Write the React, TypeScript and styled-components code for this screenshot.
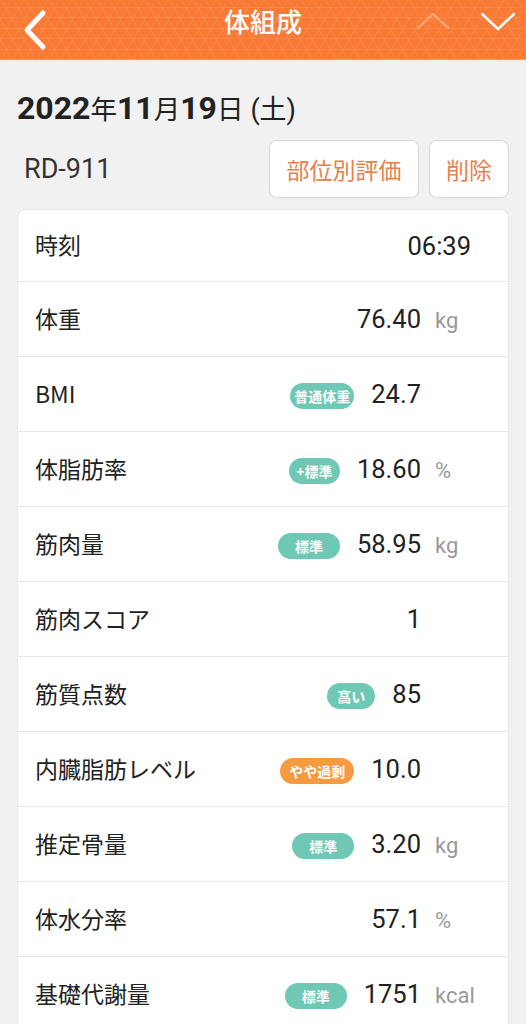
import React from 'react';
import styled, { createGlobalStyle } from 'styled-components';

const GlobalStyle = createGlobalStyle`
  html, body {
    margin: 0;
    padding: 0;
    background: #f1f1f1;
  }
  body {
    font-family: Roboto, "Noto Sans CJK JP", sans-serif;
    color: #222;
  }
`;

const Page = styled.div`
  width: 526px;
  min-height: 1024px;
  background: #f1f1f1;
  overflow: hidden;
`;

const Header = styled.header`
  height: 60px;
  display: grid;
  grid-template-columns: 60px 1fr 120px;
  align-items: center;
  background-color: #f97a34;
  background-image:
    repeating-linear-gradient(0deg, transparent 0 9.4px, rgba(255, 255, 255, 0.07) 9.4px 10.4px),
    repeating-linear-gradient(60deg, transparent 0 9.4px, rgba(255, 255, 255, 0.07) 9.4px 10.4px),
    repeating-linear-gradient(120deg, transparent 0 9.4px, rgba(255, 255, 255, 0.07) 9.4px 10.4px);
  border-bottom: 1px solid #fb9a66;
  box-sizing: border-box;
`;

const IconButton = styled.button<{ dim?: boolean }>`
  background: none;
  border: none;
  padding: 0;
  display: flex;
  align-items: center;
  justify-content: center;
  opacity: ${p => (p.dim ? 0.3 : 1)};
  cursor: pointer;
`;

const Title = styled.h1`
  margin: 0;
  text-align: center;
  color: #fff;
  font-family: "Noto Sans CJK JP", sans-serif;
  font-size: 26px;
  font-weight: 500;
  padding-left: 60px;
  margin-top: -18px;
`;

const NavGroup = styled.div`
  display: flex;
  justify-content: flex-end;
  align-items: flex-start;
  gap: 28px;
  padding-right: 10px;
  margin-top: -18px;
`;

const Main = styled.main`
  padding: 0 17px;
`;

const DateLine = styled.div`
  margin-top: 28px;
  height: 40px;
  display: flex;
  align-items: baseline;
  font-family: "Noto Sans CJK JP", sans-serif;
  font-size: 26.5px;
  color: #222;
`;

const DateNum = styled.span`
  font-family: Roboto, sans-serif;
  font-weight: 700;
  font-size: 32px;
`;

const Weekday = styled.span`
  font-family: Roboto, "Noto Sans CJK JP", sans-serif;
  font-size: 27px;
  margin-left: 7px;
`;

const ActionRow = styled.div`
  margin-top: 12px;
  display: flex;
  align-items: center;
  gap: 10px;
`;

const Model = styled.div`
  flex: 1;
  padding-left: 7px;
  font-size: 27px;
  color: #333;
`;

const ActionButton = styled.button<{ w: number }>`
  width: ${p => p.w}px;
  height: 58px;
  background: #fff;
  border: 1px solid #d8d8d8;
  border-radius: 8px;
  color: #e8804c;
  font-family: "Noto Sans CJK JP", sans-serif;
  font-size: 23px;
  padding: 0;
`;

const Card = styled.section`
  margin-top: 11px;
  background: #fff;
  border: 1px solid #e6e6e6;
  border-bottom: none;
  border-radius: 8px 8px 0 0;
`;

const Row = styled.div<{ h?: number }>`
  height: ${p => p.h ?? 74}px;
  display: flex;
  align-items: center;
  padding: 0 17px;
  border-bottom: 1px solid #e8e8e8;
`;

const Label = styled.div`
  flex: 1;
  font-family: "Noto Sans CJK JP", sans-serif;
  font-size: 23px;
  color: #222;
  margin-top: -3px;
`;

const Badge = styled.span<{ tone: 'teal' | 'orange'; w: number }>`
  width: ${p => p.w}px;
  height: 26px;
  border-radius: 13px;
  background: ${p => (p.tone === 'orange' ? '#f59a3e' : '#6ec8b4')};
  color: #fff;
  font-family: "Noto Sans CJK JP", sans-serif;
  font-size: 14px;
  font-weight: 700;
  display: inline-flex;
  align-items: center;
  justify-content: center;
  margin-right: 17px;
  margin-top: 4px;
`;

const Value = styled.span`
  font-family: Roboto, sans-serif;
  font-size: 25.5px;
  color: #222;
`;

const Unit = styled.span`
  width: 56px;
  margin-left: 14px;
  font-family: Roboto, sans-serif;
  font-size: 22px;
  color: #999;
  padding-top: 3px;
`;

const TimeValue = styled(Value)`
  margin-right: 20px;
`;

const ChevronLeft = () => (
  <svg width="40" height="50" viewBox="0 0 40 50">
    <polyline points="33,8 17,25 33,42" fill="none" stroke="#fff" strokeWidth="5" strokeLinecap="round" strokeLinejoin="round" />
  </svg>
);

const ChevronUp = () => (
  <svg width="36" height="20" viewBox="0 0 36 20">
    <polyline points="2,17 17,3 32,17" fill="none" stroke="#fff" strokeWidth="2.5" strokeLinecap="round" strokeLinejoin="round" />
  </svg>
);

const ChevronDown = () => (
  <svg width="36" height="20" viewBox="0 0 36 20">
    <polyline points="2,3 18,18 34,3" fill="none" stroke="#fff" strokeWidth="2.5" strokeLinecap="round" strokeLinejoin="round" />
  </svg>
);

type Item = {
  label: string;
  value: string;
  unit?: string;
  badge?: { text: string; tone: 'teal' | 'orange'; w: number };
};

const items: Item[] = [
  { label: '体重', value: '76.40', unit: 'kg' },
  { label: 'BMI', value: '24.7', badge: { text: '普通体重', tone: 'teal', w: 64 } },
  { label: '体脂肪率', value: '18.60', unit: '%', badge: { text: '+標準', tone: 'teal', w: 51 } },
  { label: '筋肉量', value: '58.95', unit: 'kg', badge: { text: '標準', tone: 'teal', w: 62 } },
  { label: '筋肉スコア', value: '1' },
  { label: '筋質点数', value: '85', badge: { text: '高い', tone: 'teal', w: 48 } },
  { label: '内臓脂肪レベル', value: '10.0', badge: { text: 'やや過剰', tone: 'orange', w: 74 } },
  { label: '推定骨量', value: '3.20', unit: 'kg', badge: { text: '標準', tone: 'teal', w: 62 } },
  { label: '体水分率', value: '57.1', unit: '%' },
  { label: '基礎代謝量', value: '1751', unit: 'kcal', badge: { text: '標準', tone: 'teal', w: 62 } },
];

export default function App() {
  return (
    <Page>
      <GlobalStyle />
      <Header>
        <IconButton aria-label="戻る">
          <ChevronLeft />
        </IconButton>
        <Title>体組成</Title>
        <NavGroup>
          <IconButton dim aria-label="前へ">
            <ChevronUp />
          </IconButton>
          <IconButton aria-label="次へ">
            <ChevronDown />
          </IconButton>
        </NavGroup>
      </Header>

      <Main>
        <DateLine>
          <DateNum>2022</DateNum>年<DateNum>11</DateNum>月<DateNum>19</DateNum>日
          <Weekday>(土)</Weekday>
        </DateLine>

        <ActionRow>
          <Model>RD-911</Model>
          <ActionButton w={150}>部位別評価</ActionButton>
          <ActionButton w={80}>削除</ActionButton>
        </ActionRow>

        <Card>
          <Row h={71}>
            <Label>時刻</Label>
            <TimeValue>06:39</TimeValue>
          </Row>
          {items.map(item => (
            <Row key={item.label}>
              <Label>{item.label}</Label>
              {item.badge && (
                <Badge tone={item.badge.tone} w={item.badge.w}>
                  {item.badge.text}
                </Badge>
              )}
              <Value>{item.value}</Value>
              <Unit>{item.unit ?? ''}</Unit>
            </Row>
          ))}
        </Card>
      </Main>
    </Page>
  );
}
